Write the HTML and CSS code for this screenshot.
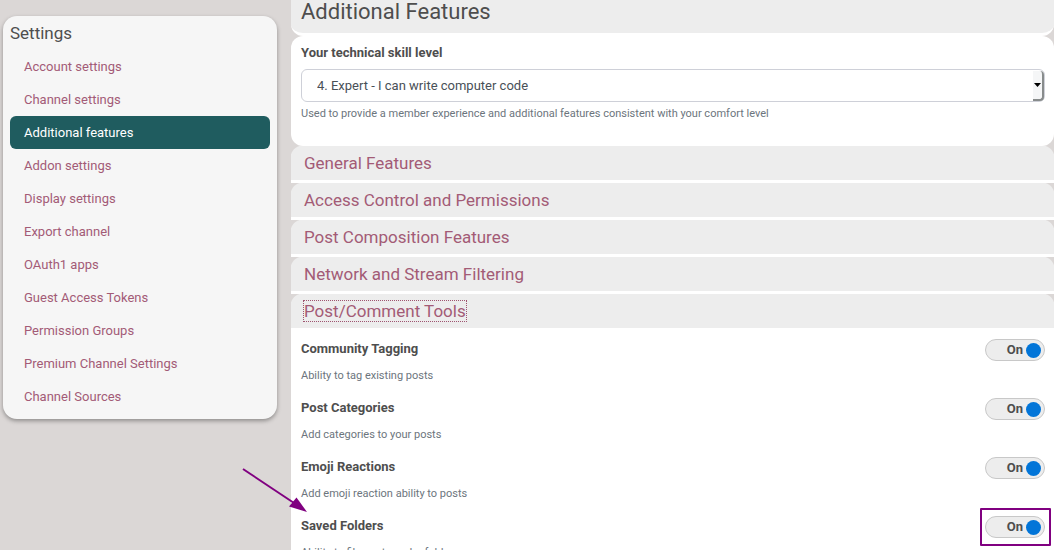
FILE: index.html
```html
<!DOCTYPE html>
<html lang="en">
<head>
<meta charset="utf-8">
<title>Additional Features</title>
<meta name="viewport" content="width=device-width, initial-scale=1">
<link rel="stylesheet" href="styles.css">
</head>
<body>
<div class="page">
  <aside class="sidebar">
    <nav class="card" aria-labelledby="nav-title">
      <h2 class="card-title" id="nav-title">Settings</h2>
      <ul class="nav">
        <li><a class="nav-link" href="#account">Account settings</a></li>
        <li><a class="nav-link" href="#channel">Channel settings</a></li>
        <li><a class="nav-link active" href="#features" aria-current="page">Additional features</a></li>
        <li><a class="nav-link" href="#addon">Addon settings</a></li>
        <li><a class="nav-link" href="#display">Display settings</a></li>
        <li><a class="nav-link" href="#export">Export channel</a></li>
        <li><a class="nav-link" href="#oauth">OAuth1 apps</a></li>
        <li><a class="nav-link" href="#tokens">Guest Access Tokens</a></li>
        <li><a class="nav-link" href="#groups">Permission Groups</a></li>
        <li><a class="nav-link" href="#premium">Premium Channel Settings</a></li>
        <li><a class="nav-link" href="#sources">Channel Sources</a></li>
      </ul>
    </nav>
  </aside>
  <main class="content">
    <h1 class="page-title">Additional Features</h1>
    <section class="skill">
      <label class="label" for="skill">Your technical skill level</label>
      <div class="select-box">
        <select class="select" id="skill">
          <option>4. Expert - I can write computer code</option>
        </select>
        <span class="select-button" aria-hidden="true">
          <svg width="7" height="4" viewBox="0 0 7 4"><path d="M0 0h7L3.5 4z"/></svg>
        </span>
      </div>
      <p class="hint">Used to provide a member experience and additional features consistent with your comfort level</p>
    </section>
    <h3 class="panel-heading"><a class="panel-link" href="#general">General Features</a></h3>
    <h3 class="panel-heading"><a class="panel-link" href="#access">Access Control and Permissions</a></h3>
    <h3 class="panel-heading"><a class="panel-link" href="#composition">Post Composition Features</a></h3>
    <h3 class="panel-heading"><a class="panel-link" href="#network">Network and Stream Filtering</a></h3>
    <h3 class="panel-heading open"><a class="panel-link focused" href="#tools">Post/Comment Tools</a></h3>
    <section class="panel-body">
      <div class="feature">
        <div class="feature-text">
          <label class="label" for="tagging">Community Tagging</label>
          <p class="hint">Ability to tag existing posts</p>
        </div>
        <span class="toggle"><span class="toggle-text">On</span><input class="knob" type="checkbox" id="tagging" checked></span>
      </div>
      <div class="feature">
        <div class="feature-text">
          <label class="label" for="categories">Post Categories</label>
          <p class="hint">Add categories to your posts</p>
        </div>
        <span class="toggle"><span class="toggle-text">On</span><input class="knob" type="checkbox" id="categories" checked></span>
      </div>
      <div class="feature">
        <div class="feature-text">
          <label class="label" for="emoji">Emoji Reactions</label>
          <p class="hint">Add emoji reaction ability to posts</p>
        </div>
        <span class="toggle"><span class="toggle-text">On</span><input class="knob" type="checkbox" id="emoji" checked></span>
      </div>
      <div class="feature">
        <svg class="arrow" width="66" height="46" viewBox="0 0 66 46" aria-hidden="true"><path d="M1 1L52 35" fill="none" stroke="#800080" stroke-width="2"/><path d="M65 44L47 38.500L54.500 29.500Z" fill="#800080"/></svg>
        <div class="feature-text">
          <label class="label" for="folders">Saved Folders</label>
          <p class="hint">Ability to file posts under folders</p>
        </div>
        <span class="toggle marked"><span class="toggle-text">On</span><input class="knob" type="checkbox" id="folders" checked></span>
      </div>
    </section>
  </main>
</div>
</body>
</html>
```
FILE: styles.css
```css
* { box-sizing: border-box; }
body {
  margin: 0;
  background: #dbd7d6;
  color: #4e4e4e;
  font: 13px/20px Roboto, "Liberation Sans", sans-serif;
}
h1, h2, h3, p, ul { margin: 0; padding: 0; font-weight: 400; }
a { text-decoration: none; color: #a35b76; }

.page {
  display: grid;
  grid-template-columns: 277px minmax(0, 1fr);
  column-gap: 14px;
  height: 100vh;
  overflow: hidden;
}
.sidebar { padding: 16px 0 0 3px; }
.card {
  padding: 7px 7px 6px;
  border-radius: 14px;
  background: #f6f6f6;
  box-shadow: 0 2px 4px rgba(0, 0, 0, 0.35);
}
.card-title { font-size: 17px; line-height: 20px; padding-bottom: 7px; }
.nav { list-style: none; }
.nav-link {
  display: block;
  padding: 7px 14px 6px;
  border-radius: 6px;
}
.nav-link.active { background: #1f5c5f; color: #fff; }

.page-title {
  height: 36px;
  padding: 0 10px;
  border-bottom: 3px solid #fff;
  border-radius: 0 0 12px 12px;
  background: #ededed;
  font-size: 22px;
  line-height: 24px;
}
.skill {
  padding: 7px 9px 22px 10px;
  border-radius: 12px;
  background: #fff;
}
.label { display: block; font-weight: 700; }
.hint { color: #6c757d; font-size: 11px; }
.select-box { position: relative; margin: 6px 0 2px; }
.select {
  display: block;
  width: 100%;
  height: 33px;
  padding: 0 15px;
  appearance: none;
  border: 1px solid #ced0d8;
  border-radius: 6px;
  background: #fff;
  color: #495057;
  font: inherit;
}
.select-button {
  position: absolute;
  top: 2px;
  right: 1px;
  bottom: 1px;
  display: grid;
  place-items: center;
  width: 11px;
  border-right: 2px solid #888c8c;
  border-bottom: 2px solid #888c8c;
  border-radius: 0 4px 4px 0;
  background: #f5f6f7;
  pointer-events: none;
}
.panel-heading {
  height: 37px;
  padding: 6px 13px;
  border-bottom: 3px solid #fff;
  background:
    radial-gradient(circle at 12px 12px, #ededed 12px, #dbd7d6 13px) left top / 12px 12px no-repeat,
    radial-gradient(circle at 0 12px, #ededed 12px, #dbd7d6 13px) right top / 12px 12px no-repeat,
    #ededed;
  font-size: 17px;
  line-height: 22px;
}
.panel-heading.open { height: 34px; border-bottom: 0; }
.panel-link.focused { outline: 1px dotted #9f5470; }

.panel-body { padding: 11px 9px 10px 10px; background: #fff; }
.feature {
  position: relative;
  display: flex;
  justify-content: space-between;
  align-items: flex-start;
  height: 59px;
}
.feature-text .hint { padding-top: 7px; }
.toggle {
  display: flex;
  align-items: center;
  justify-content: flex-end;
  gap: 3px;
  width: 60px;
  height: 22px;
  padding: 0 3px;
  border: 1px solid #c8c8c8;
  border-radius: 11px;
  background: #ededed;
}
.toggle-text { font-weight: 700; }
.knob {
  width: 15px;
  height: 15px;
  margin: 0;
  appearance: none;
  border-radius: 50%;
  background: #0275d8;
}
.marked { position: relative; }
.marked::after {
  content: "";
  position: absolute;
  inset: -9px -7px -9px -6px;
  border: 2px solid #800080;
  border-radius: 1px;
  pointer-events: none;
}
.arrow { position: absolute; left: -59px; top: -48px; }
```
